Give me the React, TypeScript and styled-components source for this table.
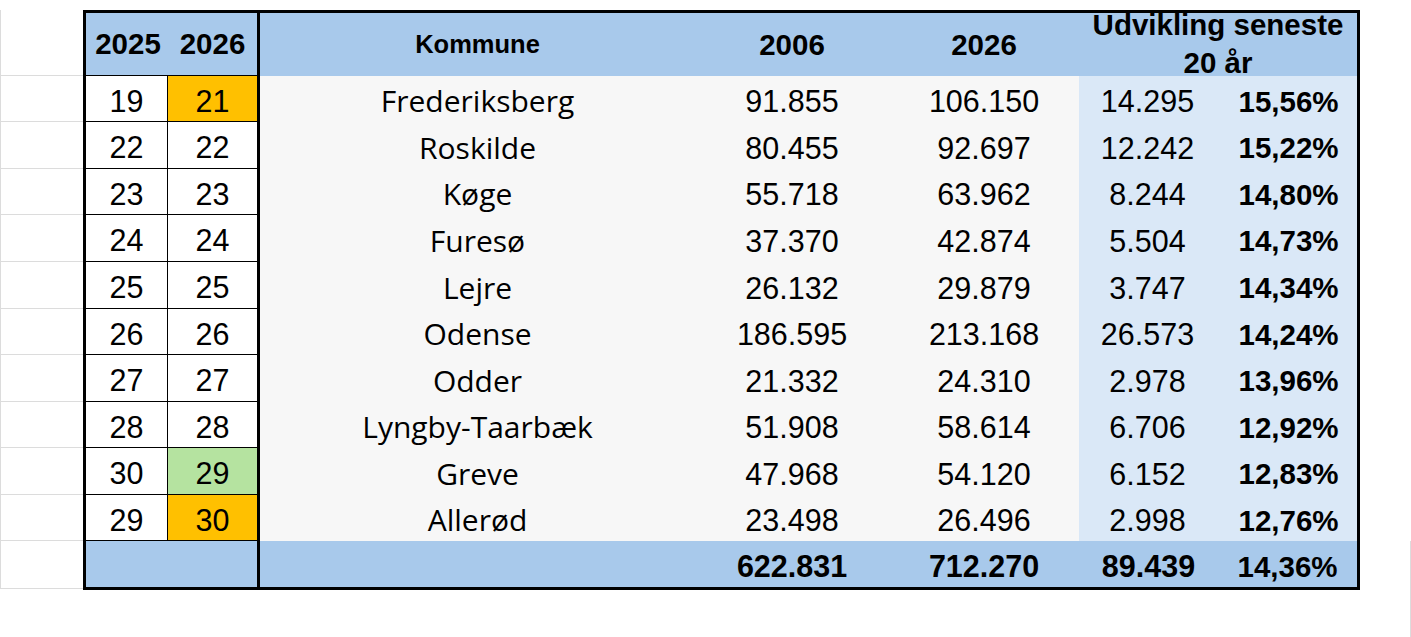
import React from 'react';
import styled, { createGlobalStyle } from 'styled-components';

const GlobalStyle = createGlobalStyle`
  html, body {
    margin: 0;
    padding: 0;
    background: #ffffff;
  }
  body {
    font-family: "Liberation Sans", Arial, sans-serif;
    color: #000000;
  }
  * {
    box-sizing: border-box;
  }
`;

const GRID = '#dcdcdc';
const HEAD_BLUE = '#a8c9eb';
const PALE_BLUE = '#dae8f7';
const PALE_GREY = '#f7f7f7';

type Move = 'up' | 'down';

interface Kommune {
  y25: number;
  y26: number;
  move?: Move;
  name: string;
  v06: string;
  v26: string;
  diff: string;
  pct: string;
}

const kommuner: Kommune[] = [
  { y25: 19, y26: 21, move: 'down', name: 'Frederiksberg', v06: '91.855', v26: '106.150', diff: '14.295', pct: '15,56%' },
  { y25: 22, y26: 22, name: 'Roskilde', v06: '80.455', v26: '92.697', diff: '12.242', pct: '15,22%' },
  { y25: 23, y26: 23, name: 'Køge', v06: '55.718', v26: '63.962', diff: '8.244', pct: '14,80%' },
  { y25: 24, y26: 24, name: 'Furesø', v06: '37.370', v26: '42.874', diff: '5.504', pct: '14,73%' },
  { y25: 25, y26: 25, name: 'Lejre', v06: '26.132', v26: '29.879', diff: '3.747', pct: '14,34%' },
  { y25: 26, y26: 26, name: 'Odense', v06: '186.595', v26: '213.168', diff: '26.573', pct: '14,24%' },
  { y25: 27, y26: 27, name: 'Odder', v06: '21.332', v26: '24.310', diff: '2.978', pct: '13,96%' },
  { y25: 28, y26: 28, name: 'Lyngby-Taarbæk', v06: '51.908', v26: '58.614', diff: '6.706', pct: '12,92%' },
  { y25: 30, y26: 29, move: 'up', name: 'Greve', v06: '47.968', v26: '54.120', diff: '6.152', pct: '12,83%' },
  { y25: 29, y26: 30, move: 'down', name: 'Allerød', v06: '23.498', v26: '26.496', diff: '2.998', pct: '12,76%' },
];

// row heights as the sheet draws them (pixels)
const HEAD_H = 63;
const ROW_H = [46, 47, 46, 47, 47, 46, 47, 46, 47, 46];
const FOOT_H = 46;

const moveColour = (m?: Move) => (m === 'down' ? '#ffc000' : m === 'up' ? '#b5e3a0' : '#ffffff');

const Sheet = styled.div`
  width: 1411px;
  height: 637px;
  overflow: hidden;
  display: flex;
  flex-direction: column;
  padding-top: 10px;
`;

const TopArea = styled.div`
  display: flex;
  align-items: flex-start;
`;

const Gutter = styled.div`
  width: 83px;
  flex-shrink: 0;
  display: flex;
  flex-direction: column;
  border-left: 1px solid ${GRID};
`;

const GutterCell = styled.div<{ $h: number }>`
  height: ${p => p.$h}px;
  border-bottom: 1px solid ${GRID};
`;

const RightGutter = styled.div`
  width: 51px;
  flex-shrink: 0;
  display: flex;
  flex-direction: column;
`;

const RightSpacer = styled.div`
  height: 531px;
`;

const RightCell = styled.div`
  height: 96px;
  border-right: 1px solid ${GRID};
`;

const BelowRow = styled.div`
  display: flex;
`;

const BelowCell = styled.div<{ $w: number; $first?: boolean }>`
  width: ${p => p.$w}px;
  height: 46px;
  border-bottom: 1px solid ${GRID};
  border-left: ${p => (p.$first ? `1px solid ${GRID}` : 'none')};
  border-right: ${p => (p.$first ? `1px solid ${GRID}` : 'none')};
`;

const Table = styled.div`
  width: 1277px;
  flex-shrink: 0;
  border: 3px solid #000000;
  display: grid;
  grid-template-columns: 82px 92px 435px 194px 190px 139px 139px;
  grid-template-rows: ${HEAD_H}px ${ROW_H.map(h => `${h}px`).join(' ')} ${FOOT_H}px;
`;

const Cell = styled.div`
  display: flex;
  align-items: center;
  justify-content: center;
  white-space: nowrap;
  font-size: 30.5px;
  line-height: normal;
`;

const HeadCell = styled(Cell)<{ $size?: number; $rank?: 'left' | 'right'; $span?: number }>`
  background: ${HEAD_BLUE};
  font-weight: 700;
  font-size: ${p => p.$size ?? 29.5}px;
  grid-column: ${p => (p.$span ? `span ${p.$span}` : 'auto')};
  border-bottom: ${p => (p.$rank ? '1px solid #000' : 'none')};
  border-right: ${p => (p.$rank === 'right' ? '3px solid #000' : 'none')};
  padding-left: ${p => (p.$rank === 'left' ? '2px' : '0')};
`;

const WrapHead = styled(HeadCell)`
  white-space: normal;
  text-align: center;
  line-height: 38px;
  padding-bottom: 1px;
`;

const RankCell = styled(Cell)<{ $bg: string; $right?: boolean }>`
  background: ${p => p.$bg};
  border-bottom: 1px solid #000000;
  border-right: ${p => (p.$right ? '3px solid #000' : '1px solid #000')};
  padding-top: 5px;
`;

const NameCell = styled(Cell)`
  background: ${PALE_GREY};
  font-family: "Open Sans", "Noto Sans", sans-serif;
  font-size: 30px;
  padding-top: 3px;
`;

const NumCell = styled(Cell)<{ $tone: 'grey' | 'blue'; $bold?: boolean; $nudge?: number }>`
  background: ${p => (p.$tone === 'grey' ? PALE_GREY : PALE_BLUE)};
  font-weight: ${p => (p.$bold ? 700 : 400)};
  font-size: ${p => (p.$bold ? 29.5 : 30.5)}px;
  padding-top: 5px;
  padding-left: ${p => ((p.$nudge ?? 0) > 0 ? `${p.$nudge}px` : '0')};
  padding-right: ${p => ((p.$nudge ?? 0) < 0 ? `${-(p.$nudge ?? 0)}px` : '0')};
`;

const TotalCell = styled(Cell)<{ $span?: number; $thick?: boolean; $pct?: boolean }>`
  background: ${HEAD_BLUE};
  font-weight: 700;
  font-size: ${p => (p.$pct ? 29.5 : 30.5)}px;
  grid-column: ${p => (p.$span ? `span ${p.$span}` : 'auto')};
  border-right: ${p => (p.$thick ? '3px solid #000' : 'none')};
  padding-top: 5px;
`;

const App: React.FC = () => {
  return (
    <>
      <GlobalStyle />
      <Sheet>
        <TopArea>
          <Gutter>
            <GutterCell $h={HEAD_H + 3} />
            {ROW_H.map((h, i) => (
              <GutterCell key={i} $h={h} />
            ))}
            <GutterCell $h={FOOT_H + 2} />
          </Gutter>

          <Table>
            <HeadCell $rank="left">2025</HeadCell>
            <HeadCell $rank="right">2026</HeadCell>
            <HeadCell $size={25.5}>Kommune</HeadCell>
            <HeadCell>2006</HeadCell>
            <HeadCell>2026</HeadCell>
            <WrapHead $span={2}>
              Udvikling seneste
              <br />
              20 år
            </WrapHead>

            {kommuner.map(k => (
              <React.Fragment key={k.name}>
                <RankCell $bg="#ffffff">{k.y25}</RankCell>
                <RankCell $bg={moveColour(k.move)} $right>
                  {k.y26}
                </RankCell>
                <NameCell>{k.name}</NameCell>
                <NumCell $tone="grey">{k.v06}</NumCell>
                <NumCell $tone="grey">{k.v26}</NumCell>
                <NumCell $tone="blue" $nudge={-2}>{k.diff}</NumCell>
                <NumCell $tone="blue" $bold $nudge={2}>
                  {k.pct}
                </NumCell>
              </React.Fragment>
            ))}

            <TotalCell $span={2} $thick />
            <TotalCell />
            <TotalCell>622.831</TotalCell>
            <TotalCell>712.270</TotalCell>
            <TotalCell>89.439</TotalCell>
            <TotalCell $pct>14,36%</TotalCell>
          </Table>

          <RightGutter>
            <RightSpacer />
            <RightCell />
          </RightGutter>
        </TopArea>

        <BelowRow>
          <BelowCell $w={86} $first />
          <BelowCell $w={82} />
        </BelowRow>
      </Sheet>
    </>
  );
};

export default App;
